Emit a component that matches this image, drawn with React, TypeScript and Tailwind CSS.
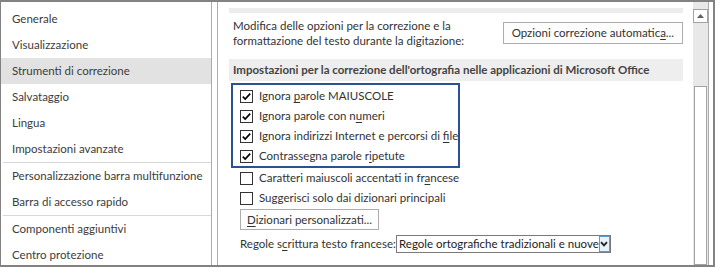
const navTop = ['Generale', 'Visualizzazione', 'Strumenti di correzione', 'Salvataggio', 'Lingua', 'Impostazioni avanzate'];
const navMid = ['Personalizzazione barra multifunzione', 'Barra di accesso rapido'];
const navBottom = ['Componenti aggiuntivi', 'Centro protezione'];

function NavItem({ label, active }: { label: string; active?: boolean }) {
  return (
    <div className={`h-[26px] flex items-center pl-[11px] whitespace-nowrap ${active ? 'bg-[#e2e2e2]' : ''}`}>
      {label}
    </div>
  );
}

function Checkbox({ checked }: { checked?: boolean }) {
  return (
    <span className="w-[13px] h-[13px] border border-[#333] bg-white flex items-center justify-center shrink-0">
      {checked && (
        <svg width="11" height="11" viewBox="0 0 11 11">
          <path d="M1.8 5.6 L4.2 8 L9.2 2.6" fill="none" stroke="#000" strokeWidth="1.7" />
        </svg>
      )}
    </span>
  );
}

function CheckRow({ checked, children }: { checked?: boolean; children: React.ReactNode }) {
  return (
    <div className="h-[20px] flex items-center gap-[6px] whitespace-nowrap">
      <Checkbox checked={checked} />
      <span>{children}</span>
    </div>
  );
}

export default function App() {
  return (
    <div className="w-[715px] h-[267px] bg-white border-[#828282] border-t-2 border-l border-r-2 border-b-2 flex overflow-hidden text-[11.5px] text-[#333] font-['Lato','Noto_Sans',sans-serif]">
      {/* Left navigation */}
      <div className="w-[211px] shrink-0 border-r border-[#acacac] pt-[4px] text-[#3c3c3c]">
        {navTop.map((n) => (
          <NavItem key={n} label={n} active={n === 'Strumenti di correzione'} />
        ))}
        <div className="h-px bg-[#d8d8d8] ml-[2px]" />
        {navMid.map((n) => (
          <NavItem key={n} label={n} />
        ))}
        <div className="h-px bg-[#d8d8d8] ml-[2px]" />
        {navBottom.map((n) => (
          <NavItem key={n} label={n} />
        ))}
      </div>

      {/* Right panel */}
      <div className="ml-[5px] w-[492px] shrink-0 border-l border-r border-[#acacac] flex">
        <div className="w-[475px] pl-[11px] pr-[10px]">
          <div className="mt-[6px] h-[5px] bg-[#ececec]" />

          <div className="mt-[5px] flex items-center">
            <div className="pl-[4px] leading-[15px]">
              Modifica delle opzioni per la correzione e la
              <br />
              formattazione del testo durante la digitazione:
            </div>
            <button className="ml-auto h-[22px] px-[8px] border border-[#adadad] bg-[#fdfdfd] whitespace-nowrap">
              Opzioni correzione automatic<u className="underline-offset-2">a</u>...
            </button>
          </div>

          <div className="mt-[11px] h-[22px] bg-[#eeeeee] font-bold pl-[4px] flex items-center whitespace-nowrap text-[#444]">
            Impostazioni per la correzione dell'ortografia nelle applicazioni di Microsoft Office
          </div>

          {/* Highlighted options */}
          <div className="mt-[2px] ml-[2px] w-[229px] border-2 border-[#2c5192] pt-[1px] pl-[7px]">
            <CheckRow checked>
              Ignora <u className="underline-offset-2">p</u>arole MAIUSCOLE
            </CheckRow>
            <CheckRow checked>
              Ignora parole con n<u className="underline-offset-2">u</u>meri
            </CheckRow>
            <CheckRow checked>
              Ignora indirizzi Internet e percorsi di <u className="underline-offset-2">f</u>ile
            </CheckRow>
            <CheckRow checked>
              Contrassegna parole r<u className="underline-offset-2">i</u>petute
            </CheckRow>
          </div>

          <div className="pl-[11px]">
            <CheckRow>
              Caratteri maiuscoli accentati in fr<u className="underline-offset-2">a</u>ncese
            </CheckRow>
            <CheckRow>Suggerisci solo dai dizionari principali</CheckRow>

            <button className="mt-[1px] h-[21px] px-[6px] border border-[#adadad] bg-[#fdfdfd] whitespace-nowrap">
              <u className="underline-offset-2">D</u>izionari personalizzati...
            </button>

            <div className="mt-[5px] h-[18px] flex items-center whitespace-nowrap">
              <span className="w-[156px] shrink-0">
                Regole s<u className="underline-offset-2">c</u>rittura testo francese:
              </span>
              <div className="w-[215px] h-[18px] border border-[#7a7a7a] flex items-center">
                <span className="pl-[2px] flex-1 text-[#222]">Regole ortografiche tradizionali e nuove</span>
                <span className="w-[18px] h-[16px] border border-[#5b9bd5] bg-[#e5f1fb] flex items-center justify-center">
                  <svg width="8" height="6" viewBox="0 0 8 6">
                    <path d="M1 1.2 L4 4.4 L7 1.2" fill="none" stroke="#222" strokeWidth="1.8" />
                  </svg>
                </span>
              </div>
            </div>
          </div>
        </div>

        {/* Scrollbar */}
        <div className="w-[15px] bg-[#e8e8e8] flex flex-col">
          <div className="mt-[7px] h-[14px] border border-[#a3a3a3] bg-white flex items-center justify-center">
            <svg width="7" height="4" viewBox="0 0 7 4">
              <path d="M0 4 L3.5 0 L7 4 Z" fill="#606060" />
            </svg>
          </div>
          <div className="mt-[63px] mx-[1px] flex-1 border border-[#a3a3a3] bg-white" />
        </div>
      </div>
    </div>
  );
}
